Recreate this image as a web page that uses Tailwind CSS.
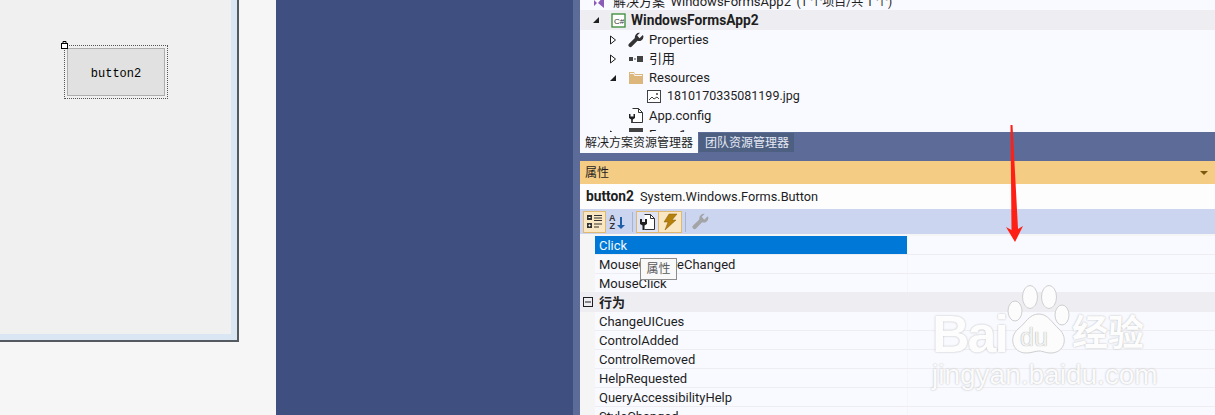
<!DOCTYPE html>
<html lang="en">
<head>
  <meta charset="UTF-8" />
  <title>Properties</title>
  <script src="https://cdn.jsdelivr.net/npm/@tailwindcss/browser@4"></script>
</head>
<body class="bg-[#f6f6f6] overflow-hidden">
  <div class="relative w-[1215px] h-[415px] flex overflow-hidden font-['Roboto','Noto_Sans_CJK_SC',sans-serif]">

    <!-- form designer -->
    <div class="w-[276px] shrink-0">
      <div class="w-[239px] h-[342px] bg-[#dae6f3] border-r-2 border-b-2 border-[#555a60] box-border">
        <div class="relative w-[231px] h-[334px] bg-[#f0f0f0]">
          <div class="absolute left-[64px] top-[45px] w-[104px] h-[54px] border border-dotted border-[#555] p-[2px]">
            <div class="w-full h-full bg-[#e1e1e1] border border-[#adadad] flex items-center justify-center pt-[3px] font-['Liberation_Mono',monospace] text-[12px] text-black">button2</div>
          </div>
          <svg class="absolute left-[61px] top-[40px]" width="7" height="9" viewBox="0 0 7 9">
            <rect x="0.5" y="3.5" width="6" height="5" fill="#fff" stroke="#000" />
            <path d="M2 3.5V1.500h3v2" fill="none" stroke="#000" />
          </svg>
        </div>
      </div>
    </div>

    <!-- navy background -->
    <div class="w-[297px] shrink-0 bg-[#3f5080]"></div>
    <div class="w-[7px] shrink-0 bg-[#5d6b99]"></div>

    <!-- right panels -->
    <div class="flex-1 flex flex-col text-[13px] text-[#1e1e1e]">

      <!-- solution explorer -->
      <div class="h-[132px] bg-[#f9faff] overflow-hidden flex flex-col shrink-0">
        <div class="h-[10px] relative shrink-0">
          <svg class="absolute left-[13px] top-[-6px]" width="14" height="14" viewBox="0 0 14 14"><path d="M1 6l3 3-3 3zM5 9l6-7v12z" fill="#8a5cb8" /></svg>
          <span class="absolute left-[33px] top-[-8px] leading-[19px] whitespace-nowrap">解决方案 'WindowsFormsApp2' <span class="text-[12px]">(1 个项目/共 1 个)</span></span>
        </div>
        <div class="h-[20px] shrink-0 bg-[#eeeef2] flex items-center">
          <svg class="ml-[12px]" width="8" height="8" viewBox="0 0 8 8"><path d="M7 1v6H1z" fill="#1e1e1e" /></svg>
          <svg class="ml-[11px]" width="15" height="15" viewBox="0 0 15 15">
            <rect x="1" y="1" width="13" height="13" fill="#fff" stroke="#388a34" stroke-width="1.300" />
            <text x="3" y="10.500" font-size="8" fill="#333" font-family="Liberation Sans">C#</text>
          </svg>
          <span class="ml-[5px] font-bold text-[13.75px]">WindowsFormsApp2</span>
        </div>
        <div class="h-[19px] shrink-0 flex items-center">
          <svg class="ml-[29px]" width="8" height="10" viewBox="0 0 8 10"><path d="M1.500 1l5 4-5 4z" fill="#fff" stroke="#1e1e1e" /></svg>
          <svg class="ml-[11px]" width="16" height="16" viewBox="0 0 16 16"><path d="M15.500 4.500a4.500 4.500 0 0 1-6 4.200L3.800 14.500a1.900 1.900 0 0 1-2.800-2.700l5.900-5.700A4.500 4.500 0 0 1 12 .8L9.200 3.500 11.500 6.300 14.800 3z" fill="#333" /></svg>
          <span class="ml-[5px]">Properties</span>
        </div>
        <div class="h-[19px] shrink-0 flex items-center">
          <svg class="ml-[29px]" width="8" height="10" viewBox="0 0 8 10"><path d="M1.500 1l5 4-5 4z" fill="#fff" stroke="#1e1e1e" /></svg>
          <svg class="ml-[11px]" width="16" height="16" viewBox="0 0 16 16"><path d="M1 6h4v4H1zM9 5h6v6H9zM6 7.500h2v1H6z" fill="#424242" /></svg>
          <span class="ml-[5px]">引用</span>
        </div>
        <div class="h-[19px] shrink-0 flex items-center">
          <svg class="ml-[29px]" width="8" height="8" viewBox="0 0 8 8"><path d="M7 1v6H1z" fill="#1e1e1e" /></svg>
          <svg class="ml-[11px]" width="16" height="16" viewBox="0 0 16 16"><path d="M1 2h5l1 2h8v10H1z" fill="#dcb67a" /><path d="M2 4h3.500l1 2H14V5H7L6 3H2z" fill="#f5f5f5" /></svg>
          <span class="ml-[5px]">Resources</span>
        </div>
        <div class="h-[19px] shrink-0 flex items-center">
          <svg class="ml-[66px]" width="16" height="16" viewBox="0 0 16 16"><rect x="1.500" y="1.500" width="13" height="12" fill="#fff" stroke="#424242" /><path d="M3 11l3-3 2 2 3-2 2 2" fill="none" stroke="#424242" /><circle cx="11" cy="5" r="1" fill="#424242" /></svg>
          <span class="ml-[5px] text-[12.5px]">1810170335081199.jpg</span>
        </div>
        <div class="h-[19px] shrink-0 flex items-center">
          <svg class="ml-[48px]" width="16" height="17" viewBox="0 0 16 17"><path d="M4.500 1.500h6l4 4v10h-10" fill="#fff" stroke="#333" /><path d="M10.500 1.500v4h4" fill="none" stroke="#333" /><path d="M1 7v4l2.200 1.500V16h1.600v-3.500L7 11V7H5.500v2.500h-3V7z" fill="#212121" /></svg>
          <span class="ml-[5px]">App.config</span>
        </div>
        <div class="h-[19px] shrink-0 flex items-center">
          <svg class="ml-[29px]" width="8" height="10" viewBox="0 0 8 10"><path d="M1.500 1l5 4-5 4z" fill="#fff" stroke="#1e1e1e" /></svg>
          <svg class="ml-[11px]" width="16" height="16" viewBox="0 0 16 16"><path d="M1 1h14v14H1z" fill="#424242" /></svg>
          <span class="ml-[5px]">Form1.cs</span>
        </div>
      </div>

      <!-- tabs -->
      <div class="h-[29px] shrink-0 bg-[#5d6b99] flex items-start text-[12px]">
        <div class="h-[21px] w-[118px] bg-[#f9faff] flex items-center pl-[5px]">解决方案资源管理器</div>
        <div class="h-[19px] w-[95px] mt-[1px] ml-[1px] bg-[#4d6082] text-[#e6e9f5] flex items-center pl-[6px]">团队资源管理器</div>
      </div>

      <!-- properties title -->
      <div class="h-[23px] shrink-0 bg-[#f5cc84] flex items-center justify-between pl-[5px] pr-[7px] text-[12px]">
        <span>属性</span>
        <svg width="8" height="4" viewBox="0 0 8 4"><path d="M0 0h8L4 4z" fill="#7a5a10" /></svg>
      </div>

      <!-- selected object -->
      <div class="h-[25px] shrink-0 bg-[#fdfdfe] flex items-center pl-[6px]">
        <span class="font-bold text-[13.75px]">button2</span>
        <span class="ml-[6px] text-[12.75px]">System.Windows.Forms.Button</span>
      </div>

      <!-- toolbar -->
      <div class="h-[25px] shrink-0 bg-[#ccd5f0] flex items-center pl-[3px]">
        <div class="w-[23px] h-[22px] bg-[#f9e6c2] border border-[#e0b870] flex items-center justify-center">
          <svg width="17" height="17" viewBox="0 0 17 17"><path d="M1 2h5v5H1zM1 10h5v5H1z" fill="#333" /><path d="M2.500 4.500h2M2.500 12.500h2M3.500 11.500v2" stroke="#fff" /><path d="M8 2.500h8M8 5h8M8 7.500h8M8 11h8M8 14h5" stroke="#333" /></svg>
        </div>
        <div class="w-[23px] h-[22px] flex items-center justify-center">
          <svg width="17" height="17" viewBox="0 0 17 17">
            <text x="0" y="8" font-size="9" font-weight="700" fill="#333" font-family="Liberation Sans">A</text>
            <text x="0.500" y="16" font-size="9" font-weight="700" fill="#333" font-family="Liberation Sans">Z</text>
            <path d="M11 4h2v8h3l-4 4-4-4h3z" fill="#1e5fa8" />
          </svg>
        </div>
        <div class="w-px h-[20px] bg-[#a9b4cc] mx-[3px]"></div>
        <div class="w-[23px] h-[22px] bg-[#dfe3f3] border border-[#e0b870] flex items-center justify-center">
          <svg width="17" height="18" viewBox="0 0 17 18"><path d="M5.500 1.500h6l4 4v11h-10" fill="#fff" stroke="#333" /><path d="M11.500 1.500v4h4" fill="none" stroke="#333" /><path d="M1 6v5l2.500 1.500V17h2v-4.500L8 11V6H6v3H3V6z" fill="#212121" /></svg>
        </div>
        <div class="w-[23px] h-[22px] bg-[#f9e6c2] border border-[#e0b870] border-l-0 flex items-center justify-center">
          <svg width="16" height="18" viewBox="0 0 16 18"><path d="M7 1h8l-5 6h4L3 17l3-8H2z" fill="#b5810c" stroke="#8a5f08" stroke-width="0.500" /></svg>
        </div>
        <div class="w-px h-[20px] bg-[#a9b4cc] mx-[3px]"></div>
        <div class="w-[23px] h-[22px] flex items-center justify-center">
          <svg width="17" height="17" viewBox="0 0 16 16"><path d="M15.500 4.500a4.500 4.500 0 0 1-6 4.200L3.800 14.500a1.900 1.900 0 0 1-2.800-2.700l5.900-5.700A4.500 4.500 0 0 1 12 .8L9.200 3.500 11.500 6.300 14.800 3z" fill="#a2a4a5" /></svg>
        </div>
      </div>

      <!-- property grid -->
      <div class="flex-1 bg-[#f5f5f5] pt-[2px] overflow-hidden">
        <div class="h-[19px] flex ml-[15px] border-b border-[#eeeef2]">
          <div class="w-[312px] bg-[#0078d7] text-[#f3f8fd] pl-[4px] pt-px flex items-center">Click</div>
          <div class="flex-1 bg-[#f9faff] ml-px"></div>
        </div>
        <div class="h-[19px] flex ml-[15px] border-b border-[#eeeef2]">
          <div class="w-[312px] bg-[#f9faff] pl-[4px] pt-px flex items-center">MouseCaptureChanged</div>
          <div class="flex-1 bg-[#f9faff] ml-px"></div>
        </div>
        <div class="h-[18px] flex ml-[15px]">
          <div class="w-[312px] bg-[#f9faff] pl-[4px] pt-[2px] flex items-center">MouseClick</div>
          <div class="flex-1 bg-[#f9faff] ml-px"></div>
        </div>
        <div class="h-[20px] bg-[#eeeef2] flex items-center font-bold">
          <svg class="ml-[3px]" width="10" height="10" viewBox="0 0 10 10"><rect x="0.500" y="0.500" width="9" height="9" fill="none" stroke="#1e1e1e" /><path d="M2 5h6" stroke="#1e1e1e" /></svg>
          <span class="ml-[6px] pt-px">行为</span>
        </div>
        <div class="h-[19px] flex ml-[15px] border-b border-[#eeeef2]">
          <div class="w-[312px] bg-[#f9faff] pl-[4px] pt-px flex items-center">ChangeUICues</div>
          <div class="flex-1 bg-[#f9faff] ml-px"></div>
        </div>
        <div class="h-[19px] flex ml-[15px] border-b border-[#eeeef2]">
          <div class="w-[312px] bg-[#f9faff] pl-[4px] pt-px flex items-center">ControlAdded</div>
          <div class="flex-1 bg-[#f9faff] ml-px"></div>
        </div>
        <div class="h-[19px] flex ml-[15px] border-b border-[#eeeef2]">
          <div class="w-[312px] bg-[#f9faff] pl-[4px] pt-px flex items-center">ControlRemoved</div>
          <div class="flex-1 bg-[#f9faff] ml-px"></div>
        </div>
        <div class="h-[19px] flex ml-[15px] border-b border-[#eeeef2]">
          <div class="w-[312px] bg-[#f9faff] pl-[4px] pt-px flex items-center">HelpRequested</div>
          <div class="flex-1 bg-[#f9faff] ml-px"></div>
        </div>
        <div class="h-[19px] flex ml-[15px] border-b border-[#eeeef2]">
          <div class="w-[312px] bg-[#f9faff] pl-[4px] pt-px flex items-center">QueryAccessibilityHelp</div>
          <div class="flex-1 bg-[#f9faff] ml-px"></div>
        </div>
        <div class="h-[19px] flex ml-[15px] border-b border-[#eeeef2]">
          <div class="w-[312px] bg-[#f9faff] pl-[4px] pt-px flex items-center">StyleChanged</div>
          <div class="flex-1 bg-[#f9faff] ml-px"></div>
        </div>
      </div>
    </div>

    <!-- tooltip over the grid -->
    <div class="absolute left-[640px] top-[258px] w-[37px] h-[22px] bg-[#f9f9f9] border border-[#8c8c8c] flex items-center justify-center text-[12px] text-[#5a5a5a]">属性</div>

    <!-- red arrow annotation -->
    <svg class="absolute left-[1000px] top-[120px]" width="30" height="130" viewBox="0 0 30 130">
      <path d="M10.500 5h2L18 109l5-3-8 16-9-15 5.500 3z" fill="#ff2015" />
    </svg>

    <!-- watermark -->
    <div class="absolute left-[932px] top-[284px] w-[240px] h-[120px] text-[#fdfdfd] [text-shadow:0_0_2px_#b4b4b4]">
      <span class="absolute left-0 top-[20px] text-[52px] leading-[60px] font-bold tracking-[-2px] font-['Liberation_Sans',sans-serif]">Bai</span>
      <svg class="absolute left-[74px] top-0" width="70" height="72" viewBox="0 0 70 72">
        <g fill="#fcfcfc" stroke="#cfcfcf" stroke-width="1">
          <ellipse cx="9" cy="27" rx="7" ry="10" />
          <ellipse cx="24" cy="13" rx="7.500" ry="11.500" />
          <ellipse cx="43" cy="13" rx="7.500" ry="11.500" />
          <ellipse cx="56" cy="31" rx="7" ry="10" />
          <path d="M33 30c9 0 13 9 20 15 10 9 5 24-8 24-6 0-8-2-12-2s-7 2-13 2C7 69 2 54 12 45c8-6 11-15 21-15z" />
        </g>
      </svg>
      <span class="absolute left-[88px] top-[38px] text-[25px] leading-[30px] text-[#f2f2f2] [text-shadow:0_0_1px_#8f8f8f] font-['Liberation_Sans',sans-serif]">du</span>
      <span class="absolute left-[140px] top-[23px] text-[36px] leading-[46px] font-bold whitespace-nowrap font-['Noto_Sans_CJK_SC',sans-serif]">经验</span>
      <span class="absolute left-0 top-[76px] text-[28px] leading-[30px] whitespace-nowrap text-[#fbfbfb] font-['Liberation_Sans',sans-serif]">jingyan.baidu.com</span>
    </div>
  </div>
</body>
</html>
